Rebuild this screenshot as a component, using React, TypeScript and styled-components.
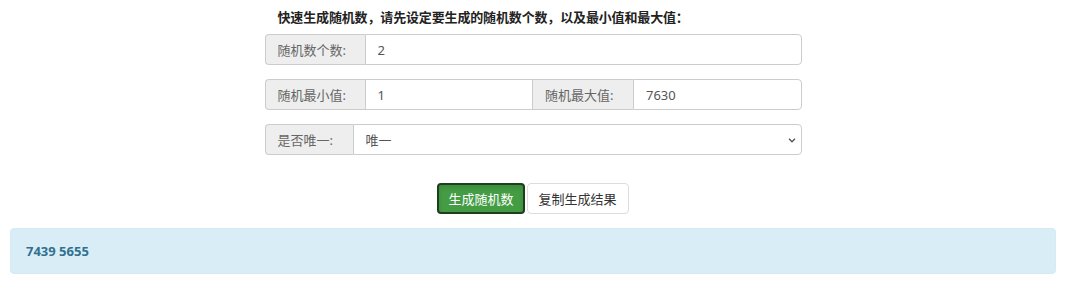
import styled, { createGlobalStyle } from 'styled-components';

const GlobalStyle = createGlobalStyle`
	body {
		margin: 0;
		font-family: "Noto Sans", "Noto Sans CJK SC", sans-serif;
		font-size: 13px;
		color: #333333;
		background: #ffffff;
	}
`;

const Page = styled.div`
	padding: 8px 24px 0 10px;
`;

const Form = styled.div`
	width: 537px;
	margin: 0 auto;
`;

const Title = styled.div`
	font-weight: 700;
	font-size: 13px;
	line-height: 18px;
	padding-left: 13px;
	margin-bottom: 8px;
	color: #222222;
	letter-spacing: -0.15px;
`;

const InputGroup = styled.div`
	display: flex;
	height: 31px;
	margin-bottom: 14px;
`;

const Addon = styled.span<{ $width: number; $first?: boolean }>`
	box-sizing: border-box;
	flex: 0 0 ${props => props.$width}px;
	display: flex;
	align-items: center;
	padding: 0 12px;
	background: #eeeeee;
	border: 1px solid #cccccc;
	border-right: none;
	color: #666666;
	font-size: 13px;
	border-radius: ${props => props.$first ? '4px 0 0 4px' : '0'};
`;

const Input = styled.input<{ $last?: boolean }>`
	box-sizing: border-box;
	flex: 1;
	min-width: 0;
	height: 100%;
	padding: 0 12px;
	border: 1px solid #cccccc;
	border-right: ${props => props.$last ? '1px solid #cccccc' : 'none'};
	border-radius: ${props => props.$last ? '0 4px 4px 0' : '0'};
	font-family: "Noto Sans", "Noto Sans CJK SC", sans-serif;
	font-size: 13px;
	color: #555555;
	outline: none;
`;

const SelectWrap = styled.div`
	position: relative;
	flex: 1;
	display: flex;
`;

const Select = styled.select`
	box-sizing: border-box;
	flex: 1;
	height: 100%;
	padding: 0 12px;
	border: 1px solid #cccccc;
	border-radius: 0 4px 4px 0;
	background: #ffffff;
	appearance: none;
	font-family: "Noto Sans", "Noto Sans CJK SC", sans-serif;
	font-size: 13px;
	color: #555555;
	outline: none;
`;

const Chevron = styled.svg`
	position: absolute;
	right: 5px;
	top: 12px;
	pointer-events: none;
`;

const ButtonRow = styled.div`
	display: flex;
	justify-content: center;
	gap: 2px;
	margin-top: 28px;
`;

const Button = styled.button<{ $primary?: boolean }>`
	box-sizing: border-box;
	height: 31px;
	padding: 0 ${props => props.$primary ? '9px' : '11px'};
	border-radius: 4px;
	font-family: "Noto Sans", "Noto Sans CJK SC", sans-serif;
	font-size: 13px;
	cursor: pointer;
	background: ${props => props.$primary ? '#449d44' : '#ffffff'};
	color: ${props => props.$primary ? '#ffffff' : '#333333'};
	border: ${props => props.$primary ? '2px solid #1f3d1f' : '1px solid #dddddd'};
	box-shadow: ${props => props.$primary ? 'inset 0 3px 5px rgba(0,0,0,.125)' : 'none'};
`;

const Alert = styled.div`
	box-sizing: border-box;
	display: flex;
	align-items: center;
	height: 46px;
	margin-top: 14px;
	padding: 0 15px;
	background: #d9edf7;
	border: 1px solid #d2ebf5;
	border-radius: 4px;
	color: #31708f;
	font-weight: 700;
	font-size: 13px;
`;

export default function App() {
	return (
		<>
			<GlobalStyle />
			<Page>
				<Form>
					<Title>快速生成随机数，请先设定要生成的随机数个数，以及最小值和最大值：</Title>
					<InputGroup>
						<Addon $width={100} $first>随机数个数:</Addon>
						<Input $last defaultValue="2" />
					</InputGroup>
					<InputGroup>
						<Addon $width={100} $first>随机最小值:</Addon>
						<Input defaultValue="1" />
						<Addon $width={101}>随机最大值:</Addon>
						<Input $last defaultValue="7630" />
					</InputGroup>
					<InputGroup>
						<Addon $width={88} $first>是否唯一:</Addon>
						<SelectWrap>
							<Select defaultValue="1">
								<option value="1">唯一</option>
								<option value="0">不唯一</option>
							</Select>
							<Chevron width="10" height="8" viewBox="0 0 10 8">
								<path d="M2 2.8 L5 5.8 L8 2.8" fill="none" stroke="#555555" strokeWidth="1.3" />
							</Chevron>
						</SelectWrap>
					</InputGroup>
					<ButtonRow>
						<Button $primary>生成随机数</Button>
						<Button>复制生成结果</Button>
					</ButtonRow>
				</Form>
				<Alert>7439 5655</Alert>
			</Page>
		</>
	);
}
